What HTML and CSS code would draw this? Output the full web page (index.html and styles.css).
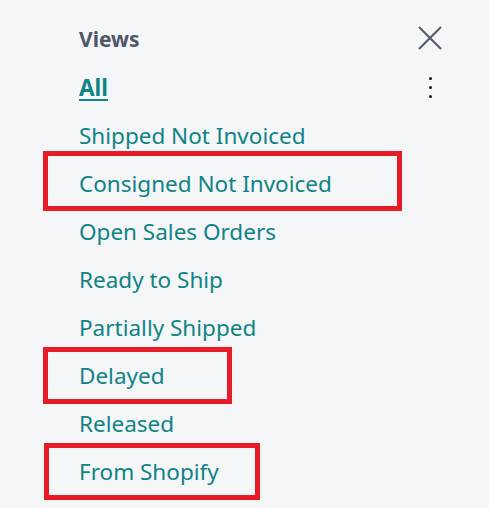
FILE: index.html
```html
<!DOCTYPE html>
<html>
<head>
<meta charset="utf-8">
<link rel="stylesheet" href="styles.css">
</head>
<body>
<div class="panel">
  <div class="head">
    <h2 class="title">Views</h2>
    <button class="close" aria-label="Close">
      <svg width="24" height="24" viewBox="0 0 24 24"><path d="M1 1 L23 23 M23 1 L1 23" stroke="#4f5a6b" stroke-width="2" fill="none"/></svg>
    </button>
  </div>
  <ul class="views">
    <li class="item active"><a>All</a><span class="more"><i></i><i></i><i></i></span></li>
    <li class="item"><a>Shipped Not Invoiced</a></li>
    <li class="item mark mark-a"><a>Consigned Not Invoiced</a></li>
    <li class="item"><a>Open Sales Orders</a></li>
    <li class="item"><a>Ready to Ship</a></li>
    <li class="item"><a>Partially Shipped</a></li>
    <li class="item mark mark-b"><a>Delayed</a></li>
    <li class="item"><a>Released</a></li>
    <li class="item mark mark-c"><a>From Shopify</a></li>
  </ul>
</div>
</body>
</html>
```
FILE: styles.css
```css
html, body {
  margin: 0;
  padding: 0;
  background: #f5f6f8;
  font-family: "Noto Sans", "Open Sans", sans-serif;
}
.panel {
  padding: 18px 0 30px 79px;
  width: 410px;
}
.head {
  display: flex;
  justify-content: space-between;
  align-items: center;
  height: 44px;
  padding-top: 1px;
  align-items: flex-start;
}
.title {
  margin: 0;
  font-size: 21px;
  font-weight: 700;
  line-height: 40px;
  color: #4d5768;
}
.close {
  background: none;
  border: 0;
  padding: 0;
  width: 24px;
  height: 24px;
  margin-top: 7px;
  margin-right: 47px;
  display: flex;
}
.views {
  list-style: none;
  margin: 0;
  padding: 0;
}
.item {
  position: relative;
  height: 48px;
  display: flex;
  align-items: center;
  font-size: 22.5px;
  color: #0f8386;
}
.item a {
  color: inherit;
}
.item.active a {
  font-weight: 700;
  text-decoration: underline;
  text-decoration-thickness: 2px;
  text-underline-offset: 3px;
}
.more {
  display: flex;
  flex-direction: column;
  gap: 6px;
  margin-left: auto;
  margin-right: 57px;
}
.more i {
  width: 3px;
  height: 3px;
  background: #111;
  border-radius: 50%;
}
.mark::before {
  content: "";
  position: absolute;
  left: -36px;
  top: -4px;
  bottom: -5px;
  border: 5px solid #e81c27;
}
.mark-a::before { width: 349px; top: -8px; bottom: -4px; }
.mark-b::before { width: 179px; }
.mark-c::before { left: -35px; width: 206px; }
```
